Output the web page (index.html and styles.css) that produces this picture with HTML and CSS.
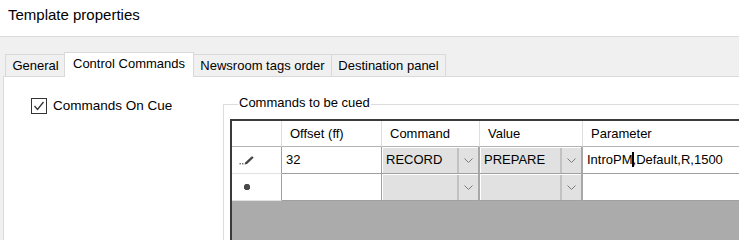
FILE: index.html
```html
<!DOCTYPE html>
<html>
<head>
<meta charset="utf-8">
<title>Template properties</title>
<link rel="stylesheet" href="styles.css">
</head>
<body>
<div class="titlebar">Template properties</div>
<div class="dialog">
  <div class="tabstrip">
    <div class="tab tab-general">General</div>
    <div class="tab tab-active tab-control">Control Commands</div>
    <div class="tab tab-news">Newsroom tags order</div>
    <div class="tab tab-dest">Destination panel</div>
  </div>
  <div class="tabpage">
    <div class="leftcol">
      <div class="checkrow">
        <span class="checkbox"><svg width="14" height="14" viewBox="0 0 14 14"><polyline points="2.5,7 5.5,10.5 11.5,3" fill="none" stroke="#333" stroke-width="1.3"/></svg></span>
        <span class="checklabel">Commands On Cue</span>
      </div>
    </div>
    <div class="group">
      <div class="group-label">Commands to be cued</div>
      <div class="grid">
        <div class="row row-header">
          <div class="cell hcell rowhdr"></div>
          <div class="cell hcell">Offset (ff)</div>
          <div class="cell hcell">Command</div>
          <div class="cell hcell">Value</div>
          <div class="cell hcell">Parameter</div>
        </div>
        <div class="row">
          <div class="cell rowhdr"><svg class="pencil" width="15" height="9" viewBox="0 0 15 9"><rect x="0.5" y="7" width="1.4" height="1.4" fill="#666"/><rect x="3" y="7" width="1.4" height="1.4" fill="#666"/><polygon points="5.5,8.5 6.2,6.4 12,1 13.8,2.6 8,8 " fill="#444"/><polygon points="12,1 13,0.2 14.6,1.7 13.8,2.6" fill="#222"/></svg></div>
          <div class="cell text">32</div>
          <div class="cell combo"><span class="ctext">RECORD</span><span class="cbtn"><svg width="9" height="5" viewBox="0 0 9 5"><polyline points="0.5,0.5 4.5,4.5 8.5,0.5" fill="none" stroke="#7a7a7a" stroke-width="1"/></svg></span></div>
          <div class="cell combo"><span class="ctext">PREPARE</span><span class="cbtn"><svg width="9" height="5" viewBox="0 0 9 5"><polyline points="0.5,0.5 4.5,4.5 8.5,0.5" fill="none" stroke="#7a7a7a" stroke-width="1"/></svg></span></div>
          <div class="cell text param">IntroPM<span class="caret"></span>,Default,R,1500</div>
        </div>
        <div class="row">
          <div class="cell rowhdr rowhdr-new"><svg width="6" height="6" viewBox="0 0 6 6"><polygon points="1.5,0 4.5,0 6,1.5 6,4.5 4.5,6 1.5,6 0,4.5 0,1.5" fill="#4a4a4a"/></svg></div>
          <div class="cell text"></div>
          <div class="cell combo"><span class="ctext"></span><span class="cbtn"><svg width="9" height="5" viewBox="0 0 9 5"><polyline points="0.5,0.5 4.5,4.5 8.5,0.5" fill="none" stroke="#7a7a7a" stroke-width="1"/></svg></span></div>
          <div class="cell combo"><span class="ctext"></span><span class="cbtn"><svg width="9" height="5" viewBox="0 0 9 5"><polyline points="0.5,0.5 4.5,4.5 8.5,0.5" fill="none" stroke="#7a7a7a" stroke-width="1"/></svg></span></div>
          <div class="cell text"></div>
        </div>
        <div class="grid-empty"></div>
      </div>
    </div>
  </div>
</div>
</body>
</html>
```

FILE: styles.css
```css
html, body {
  margin: 0;
  height: 100%;
  overflow: hidden;
}

body {
  background: #f0f0f0;
  font-family: "Liberation Sans", Arial, sans-serif;
  font-size: 13px;
  color: #000;
}

.titlebar {
  height: 37px;
  box-sizing: border-box;
  background: #fff;
  border-bottom: 1px solid #dcdcdc;
  padding: 5px 0 0 8px;
  font-size: 15px;
  line-height: 20px;
}

.dialog {
  padding-left: 3px;
  display: flex;
  flex-direction: column;
  height: calc(100% - 37px);
  overflow: hidden;
}

.tabstrip {
  display: flex;
  align-items: flex-end;
  height: 24px;
  margin-top: 15px;
  padding-left: 2px;
  position: relative;
  z-index: 1;
  flex: none;
}

.tab {
  box-sizing: border-box;
  height: 22px;
  border: 1px solid #d9d9d9;
  border-bottom: none;
  background: #f0f0f0;
  text-align: center;
  line-height: 21px;
  white-space: nowrap;
}

.tab-general { width: 61px; }
.tab-control { width: 130px; margin-left: -2px; }
.tab-news { width: 139px; margin-left: -1px; }
.tab-dest { width: 115px; margin-left: -1px; }

.tab-active {
  height: 25px;
  margin-bottom: -1px;
  background: #fff;
  position: relative;
  z-index: 2;
}

.tabpage {
  flex: 1;
  background: #fff;
  border: 1px solid #d9d9d9;
  border-right: none;
  border-bottom: none;
  display: flex;
  align-items: flex-start;
  min-height: 0;
  min-width: 0;
  overflow: hidden;
}

.leftcol {
  width: 219px;
  flex: none;
}

.checkrow {
  display: flex;
  align-items: center;
  margin: 21px 0 0 27px;
}

.checkbox {
  width: 16px;
  height: 16px;
  box-sizing: border-box;
  border: 1px solid #333;
  display: flex;
  align-items: center;
  justify-content: center;
}

.checklabel {
  margin-left: 6px;
  font-size: 13.5px;
  line-height: 16px;
}

.group {
  margin-top: 27px;
  border-top: 1px solid #dcdcdc;
  border-left: 1px solid #dcdcdc;
  padding-left: 6px;
  flex: 1;
  min-width: 0;
}

.group-label {
  width: max-content;
  margin: -10px 0 0 8px;
  padding: 0 1px;
  background: #fff;
  line-height: 16px;
}

.grid {
  margin-top: 8px;
  width: calc(100% + 40px);
  border-top: 2px solid #3a3a3a;
  border-left: 2px solid #3a3a3a;
}

.row {
  display: grid;
  grid-template-columns: 50px 100px 98px 103px 1fr;
  height: 27px;
  background: #fff;
}

.row-header {
  height: 26px;
}

.cell {
  box-sizing: border-box;
  border-right: 1px solid #a0a0a0;
  border-bottom: 1px solid #a0a0a0;
  line-height: 26px;
  white-space: nowrap;
  overflow: hidden;
}

.hcell {
  border-right-color: #dedede;
  border-bottom-color: #b4b4b4;
  padding-left: 8px;
  line-height: 25px;
}

.rowhdr {
  border-bottom-color: #e2e2e2;
  display: flex;
  align-items: center;
  padding-left: 7px;
}

.hcell.rowhdr {
  border-right-color: #dedede;
  border-bottom-color: #b4b4b4;
}

.rowhdr-new {
  padding-left: 12px;
}

.text {
  padding-left: 4px;
}

.param {
  padding-left: 4px;
}

.caret {
  display: inline-block;
  width: 2px;
  height: 15px;
  background: #000;
  vertical-align: -3px;
  margin: 0 -1px 0 -1px;
}

.combo {
  display: flex;
  padding: 1px 0 0 1px;
  border-right: 2px solid #a8a8a8;
}

.ctext {
  flex: 1;
  background: #e1e1e1;
  padding-left: 3px;
  line-height: 24px;
  border-right: 2px solid #c2c2c2;
}

.cbtn {
  width: 19px;
  background: #e1e1e1;
  display: flex;
  align-items: center;
  justify-content: center;
}

.grid-empty {
  height: 40px;
  background: #ababab;
}
```
